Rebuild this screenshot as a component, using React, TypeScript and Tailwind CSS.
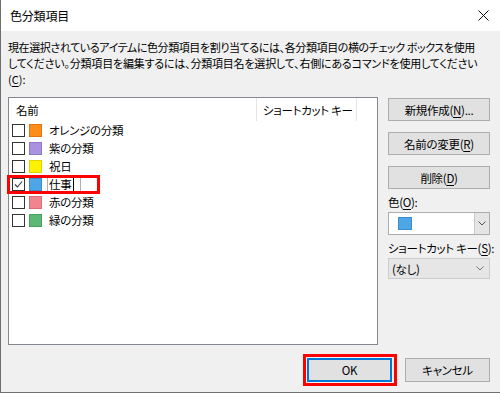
import React from "react";

const font = "[font-family:'Noto_Sans_CJK_JP','Noto_Sans',sans-serif] [font-feature-settings:'palt']";

function U({ c }: { c: string }) {
  return <span className="underline underline-offset-[2px]">{c}</span>;
}

function Checkbox({ checked }: { checked?: boolean }) {
  return (
    <div className="w-[13px] h-[13px] border border-[#333333] bg-white flex items-center justify-center shrink-0">
      {checked && (
        <svg width="9" height="9" viewBox="0 0 9 9">
          <polyline points="1,4.5 3.5,7 8,1.5" fill="none" stroke="#333" strokeWidth="1.1" />
        </svg>
      )}
    </div>
  );
}

function Chevron({ color = "#555" }: { color?: string }) {
  return (
    <svg width="8" height="5" viewBox="0 0 8 5">
      <polyline points="0.5,0.5 4,4 7.5,0.5" fill="none" stroke={color} strokeWidth="1" />
    </svg>
  );
}

const rows = [
  { name: "オレンジの分類", fill: "#ff8c1a", border: "#e07410" },
  { name: "紫の分類", fill: "#a993e0", border: "#8f78c8" },
  { name: "祝日", fill: "#fff200", border: "#e0d400" },
  { name: "仕事", fill: "#4ea6e6", border: "#3a8ccc", checked: true, edit: true },
  { name: "赤の分類", fill: "#f08491", border: "#d86c79" },
  { name: "緑の分類", fill: "#5cb874", border: "#46a05e" },
];

const txt = "text-[11.5px] leading-[16px] tracking-[-0.3px]";

function Btn({ children }: { children: React.ReactNode }) {
  return (
    <div className={`h-[23px] w-[102px] bg-[#e1e1e1] border border-[#adadad] flex items-center justify-center text-black ${txt}`}>
      {children}
    </div>
  );
}

export default function App() {
  return (
    <div className={`w-[500px] h-[393px] flex flex-col border-l border-b border-[#707070] text-black overflow-hidden ${font}`}>
      <div className="h-[31px] bg-white flex items-center justify-between pl-[9px] pr-[11px] shrink-0">
        <span className="text-[12px] leading-[16px] tracking-[-0.2px]">色分類項目</span>
        <svg width="11" height="11" viewBox="0 0 11 11">
          <line x1="0.5" y1="0.5" x2="10.5" y2="10.5" stroke="#111" strokeWidth="1" />
          <line x1="10.5" y1="0.5" x2="0.5" y2="10.5" stroke="#111" strokeWidth="1" />
        </svg>
      </div>
      <div className="flex-1 bg-[#f0f0f0] flex flex-col pl-[7px] pr-[10px] pt-[8px]">
        <div className="text-[11px] leading-[16px] whitespace-nowrap">
          <div className="tracking-[-0.4px]">現在選択されているアイテムに色分類項目を割り当てるには、各分類項目の横のチェック ボックスを使用</div>
          <div className="tracking-[-0.2px]">してください。分類項目を編集するには、分類項目名を選択して、右側にあるコマンドを使用してください</div>
          <div>(<U c="C" />):</div>
        </div>
        <div className="flex mt-[10px]">
          <div className="w-[370px] h-[248px] shrink-0 bg-white border border-[#828790] flex flex-col">
            <div className={`h-[23px] flex items-center shrink-0 ${txt}`}>
              <div className="w-[248px] shrink-0 h-full flex items-center pl-[7px] border-r border-[#e5e5e5]">名前</div>
              <div className="w-[100px] shrink-0 h-full flex items-center pl-[6px] border-r border-[#e5e5e5] whitespace-nowrap">ショートカット キー</div>
            </div>
            {rows.map((r) => (
              <div key={r.name} className={`relative h-[18px] flex items-center pl-[3px] ${txt}`}>
                <Checkbox checked={r.checked} />
                <div
                  className="w-[13px] h-[13px] ml-[4px] border shrink-0"
                  style={{ background: r.fill, borderColor: r.border }}
                />
                {r.edit ? (
                  <div className="ml-[5px] w-[34px] h-[18px] border border-[#b0b0b0] flex items-center pl-[1px]">
                    <span>仕事</span>
                    <span className="w-[1px] h-[13px] bg-black ml-[2px]" />
                  </div>
                ) : (
                  <span className="ml-[7px] whitespace-nowrap">{r.name}</span>
                )}
                {r.edit && (
                  <div className="absolute left-[-2px] top-[0px] w-[93px] h-[19px] border-[3px] border-[#ff0000]" />
                )}
              </div>
            ))}
          </div>
          <div className="ml-[10px] w-[102px] shrink-0 flex flex-col mt-[1px]">
            <Btn>
              新規作成(<U c="N" />)...
            </Btn>
            <div className="mt-[11px]">
              <Btn>
                名前の変更(<U c="R" />)
              </Btn>
            </div>
            <div className="mt-[11px]">
              <Btn>
                削除(<U c="D" />)
              </Btn>
            </div>
            <div className={`mt-[5px] ${txt}`}>
              色(<U c="O" />):
            </div>
            <div className="mt-[2px] h-[23px] w-[102px] bg-white border border-[#adadad] flex items-center">
              <div className="ml-[9px] w-[14px] h-[13px] bg-[#4ea6e6] border border-[#3a8ccc]" />
              <div className="ml-auto h-full w-[15px] bg-[#e5e5e5] border-l border-[#c8c8c8] flex items-center justify-center">
                <Chevron />
              </div>
            </div>
            <div className={`mt-[5px] whitespace-nowrap ${txt}`}>
              ショートカット キー(<U c="S" />):
            </div>
            <div className={`mt-[2px] h-[21px] w-[102px] bg-[#e6e6e6] border border-[#cccccc] flex items-center pl-[3px] pr-[5px] ${txt}`}>
              <span>(なし)</span>
              <span className="ml-auto flex items-center">
                <Chevron color="#777" />
              </span>
            </div>
          </div>
        </div>
        <div className="flex justify-end mt-[13px]">
          <div className="relative">
            <div className="absolute -left-[4px] -top-[4px] -right-[5px] -bottom-[4px] border-[3px] border-[#ff0000]" />
            <div className={`h-[24px] w-[85px] bg-[#e1e1e1] border-2 border-[#0078d7] flex items-center justify-center ${txt}`}>
              OK
            </div>
          </div>
          <div className={`ml-[13px] h-[24px] w-[85px] bg-[#e1e1e1] border border-[#adadad] flex items-center justify-center ${txt}`}>
            キャンセル
          </div>
        </div>
      </div>
    </div>
  );
}
